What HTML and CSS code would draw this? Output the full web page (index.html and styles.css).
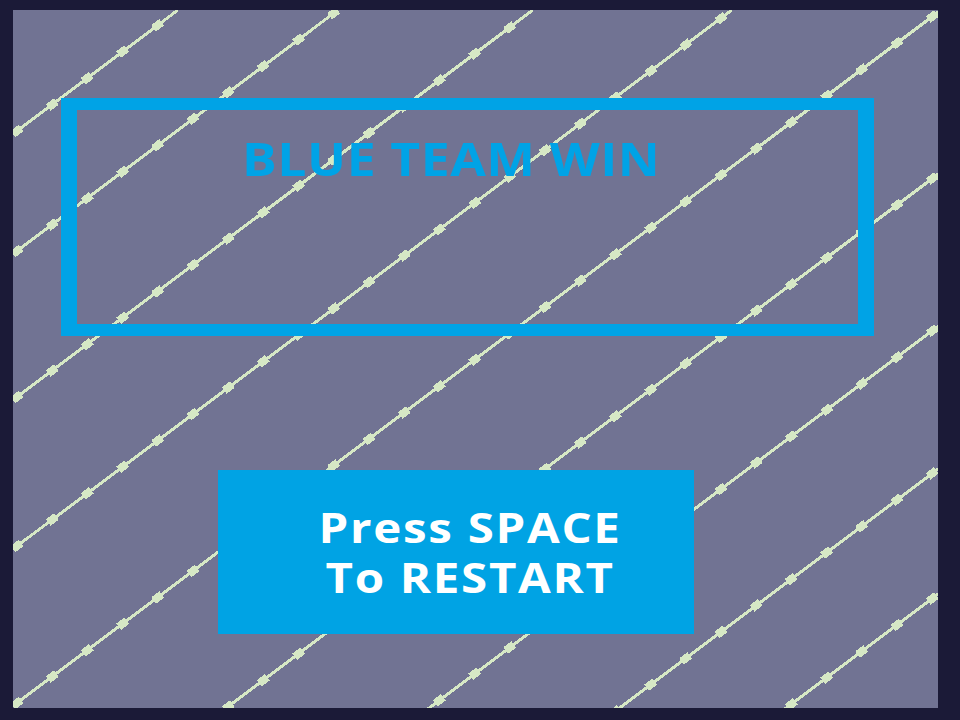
FILE: index.html
```html
<!DOCTYPE html>
<html>
<head>
<meta charset="utf-8">
<link rel="stylesheet" href="styles.css">
</head>
<body>
<div class="screen">
  <svg class="streaks" width="925" height="698" viewBox="0 0 925 698" shape-rendering="crispEdges">
    <g class="thin">
      <line x1="0" y1="124" x2="165" y2="0"/>
      <line x1="0" y1="244" x2="325" y2="0"/>
      <line x1="0" y1="390" x2="520" y2="0"/>
      <line x1="0" y1="539" x2="719" y2="0"/>
      <line x1="0" y1="696" x2="928" y2="0"/>
      <line x1="0" y1="858" x2="1144" y2="0"/>
      <line x1="0" y1="1010" x2="1347" y2="0"/>
      <line x1="0" y1="1153" x2="1537" y2="0"/>
      <line x1="0" y1="1278" x2="1704" y2="0"/>
    </g>
    <g class="blocks">
      <line x1="0" y1="124" x2="165" y2="0"/>
      <line x1="0" y1="244" x2="325" y2="0"/>
      <line x1="0" y1="390" x2="520" y2="0"/>
      <line x1="0" y1="539" x2="719" y2="0"/>
      <line x1="0" y1="696" x2="928" y2="0"/>
      <line x1="0" y1="858" x2="1144" y2="0"/>
      <line x1="0" y1="1010" x2="1347" y2="0"/>
      <line x1="0" y1="1153" x2="1537" y2="0"/>
      <line x1="0" y1="1278" x2="1704" y2="0"/>
    </g>
  </svg>
  <div class="result">
    <div class="result-title">BLUE TEAM WIN</div>
  </div>
  <div class="restart">
    <div class="restart-text">
      <div class="restart-line">Press SPACE</div>
      <div class="restart-line">To RESTART</div>
    </div>
  </div>
</div>
</body>
</html>
```
FILE: styles.css
```css
html, body {
  margin: 0;
  padding: 0;
  background: #1b1a37;
  width: 960px;
  height: 720px;
  overflow: hidden;
}
body {
  padding: 10px 0 0 13px;
  box-sizing: border-box;
}
.screen {
  position: relative;
  width: 925px;
  height: 698px;
  background: #717393;
  overflow: hidden;
  display: flex;
  flex-direction: column;
  align-items: flex-start;
  padding: 88px 0 0 48px;
  box-sizing: border-box;
  font-family: "Open Sans", "Liberation Sans", sans-serif;
  font-weight: 700;
}
.streaks {
  position: absolute;
  left: 0;
  top: 0;
}
.streaks line {
  stroke: #d6e8c5;
}
.thin line {
  stroke-width: 3;
}
.blocks line {
  stroke-width: 8;
  stroke-dasharray: 10 34;
}
.result {
  position: relative;
  width: 813px;
  height: 238px;
  box-sizing: border-box;
  border-style: solid;
  border-color: #00a3e6;
  border-width: 12px 16px;
  padding: 20px 0 0 165px;
}
.result-title {
  color: #00a3e6;
  font-size: 47px;
  line-height: 56px;
  letter-spacing: 0.5px;
  white-space: nowrap;
  transform: scaleX(1.1);
  transform-origin: left center;
}
.restart {
  position: relative;
  margin: 134px 0 0 157px;
  width: 476px;
  height: 164px;
  background: #00a3e4;
  display: flex;
  align-items: center;
  justify-content: center;
  padding-left: 29px;
  box-sizing: border-box;
}
.restart-text {
  color: #ffffff;
  font-size: 42px;
  letter-spacing: 1.5px;
  text-align: center;
  display: flex;
  flex-direction: column;
  gap: 8px;
  transform: scaleX(1.13);
  transform-origin: center center;
}
.restart-line {
  line-height: 42px;
  height: 42px;
  white-space: nowrap;
}
```
